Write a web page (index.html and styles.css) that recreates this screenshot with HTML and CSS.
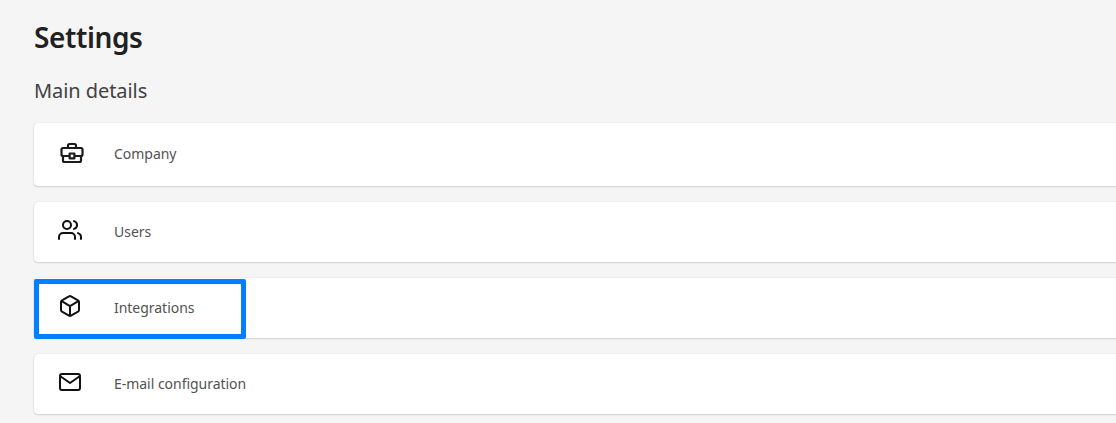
FILE: index.html
```
<!DOCTYPE html>
<html lang="en">
<head>
<meta charset="utf-8">
<title>Settings</title>
<link rel="stylesheet" href="styles.css">
</head>
<body>
<main class="page">
  <h1 class="title">Settings</h1>
  <h2 class="subtitle">Main details</h2>
  <div class="list">
    <a class="row row-company">
      <svg class="icon" viewBox="0 0 24 24"><path d="M8 7V4.500A1.500 1.500 0 0 1 9.500 3h5A1.500 1.500 0 0 1 16 4.500V7M9.500 15H3A1.500 1.500 0 0 1 1.500 13.500V8.500A1.500 1.500 0 0 1 3 7h18A1.500 1.500 0 0 1 22.500 8.500v5A1.500 1.500 0 0 1 21 15h-6.500M3 15v4.500A1.500 1.500 0 0 0 4.500 21h15a1.500 1.500 0 0 0 1.500-1.500V15M9.600 12.500h4.800v4.800H9.600z"/></svg>
      <span class="label">Company</span>
    </a>
    <a class="row">
      <svg class="icon" viewBox="0 0 24 24"><path d="M17 21v-2a4 4 0 0 0-4-4H5a4 4 0 0 0-4 4v2M23 21v-2a4 4 0 0 0-3-3.870M16 3.130a4 4 0 0 1 0 7.750"/><circle cx="9" cy="7" r="4"/></svg>
      <span class="label">Users</span>
    </a>
    <a class="row row-selected">
      <svg class="icon" viewBox="0 0 24 24"><path d="M21 16V8a2 2 0 0 0-1-1.730l-7-4a2 2 0 0 0-2 0l-7 4A2 2 0 0 0 3 8v8a2 2 0 0 0 1 1.730l7 4a2 2 0 0 0 2 0l7-4A2 2 0 0 0 21 16zM3.270 6.960 12 12.010l8.730-5.050M12 22.080V12"/></svg>
      <span class="label">Integrations</span>
    </a>
    <a class="row">
      <svg class="icon" viewBox="0 0 24 24"><path d="M4 4h16a2 2 0 0 1 2 2v12a2 2 0 0 1-2 2H4a2 2 0 0 1-2-2V6a2 2 0 0 1 2-2zM22 6l-10 7L2 6"/></svg>
      <span class="label">E-mail configuration</span>
    </a>
  </div>
</main>
</body>
</html>
```
FILE: styles.css
```
*, *::after { box-sizing: border-box; }
body {
  margin: 0;
  height: 423px;
  overflow: hidden;
  background: #f5f5f5;
  color: #212121;
  font-family: "Noto Sans", sans-serif;
}
.page { padding: 17px 0 0 34px; }
.title { margin: 0; font-size: 28px; line-height: 40px; font-weight: 600; letter-spacing: -0.4px; }
.subtitle { margin: 19px 0 0; font-size: 20px; line-height: 30px; font-weight: 400; letter-spacing: -0.07px; color: #424242; }
.list { display: flex; flex-direction: column; gap: 16px; margin-top: 17px; }
.row {
  position: relative;
  display: flex;
  align-items: center;
  height: 60px;
  margin-right: -10px;
  padding-left: 24px;
  background: #fff;
  border-radius: 4px;
  box-shadow: 0 1px 2px rgba(0, 0, 0, 0.14), 0 0 1px rgba(0, 0, 0, 0.2);
}
.row-company { height: 63px; padding-left: 26px; }
.icon {
  width: 24px;
  height: 24px;
  margin-bottom: 4px;
  fill: none;
  stroke: #111;
  stroke-width: 2;
  stroke-linecap: round;
  stroke-linejoin: round;
}
.row-company .icon { stroke: #1c1c1c; stroke-width: 2.2; }
.label { margin-left: 32px; font-size: 14px; line-height: 20px; letter-spacing: -0.03px; color: #525252; }
.row-company .label { margin: 0 0 1px 30px; }
.row-selected::after {
  content: "";
  position: absolute;
  left: 0;
  top: 1px;
  width: 212px;
  height: 60px;
  border: 5px solid #0080ff;
  border-radius: 2px;
}
```
